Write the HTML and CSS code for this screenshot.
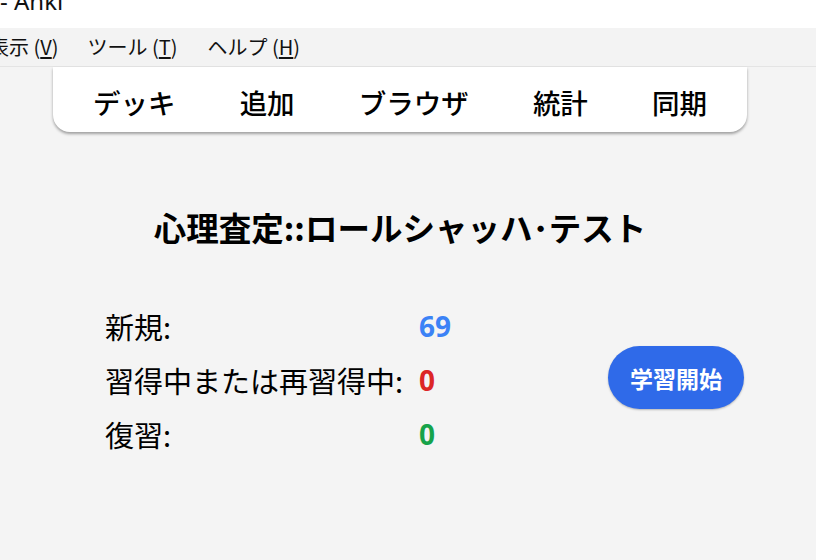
FILE: index.html
```html
<!DOCTYPE html>
<html lang="ja">
<head>
<meta charset="utf-8">
<link rel="stylesheet" href="styles.css">
</head>
<body>
<div class="titlebar"><span class="title">- Anki</span></div>
<div class="menubar">
  <span class="menu m1">表示 (<u>V</u>)</span>
  <span class="menu">ツール (<u>T</u>)</span>
  <span class="menu">ヘルプ (<u>H</u>)</span>
</div>
<main class="content">
  <nav class="toolbar">
    <span class="tb">デッキ</span>
    <span class="tb">追加</span>
    <span class="tb">ブラウザ</span>
    <span class="tb">統計</span>
    <span class="tb">同期</span>
  </nav>
  <h1 class="deck">心理査定::ロールシャッハ･テスト</h1>
  <div class="overview">
    <div class="counts">
      <div class="label">新規:</div><div class="num new">69</div>
      <div class="label">習得中または再習得中:</div><div class="num learn">0</div>
      <div class="label">復習:</div><div class="num review">0</div>
    </div>
    <button class="study">学習開始</button>
  </div>
</main>
</body>
</html>
```

FILE: styles.css
```css
html, body {
  margin: 0;
  padding: 0;
  width: 816px;
  height: 560px;
  overflow: hidden;
  background: #f4f4f4;
  font-family: "Noto Sans CJK JP", "Noto Sans", sans-serif;
  color: #000;
}
.titlebar {
  height: 28px;
  background: #ffffff;
  overflow: hidden;
}
.title {
  display: block;
  margin-top: -15px;
  font-family: "Noto Sans", "Noto Sans CJK JP", sans-serif;
  font-size: 24px;
  line-height: 32px;
  color: #111;
}
.menubar {
  height: 39px;
  background: #f3f3f3;
  border-bottom: 1px solid #e4e4e4;
  display: flex;
  align-items: center;
  box-sizing: border-box;
}
.menu {
  font-size: 20px;
  line-height: 26px;
  margin-right: 30px;
  color: #111;
  white-space: nowrap;
}
.menu u { text-underline-offset: 2px; }
.m1 { margin-left: -11px; margin-right: 29px; }
.content {
  width: 800px;
  display: flex;
  flex-direction: column;
  align-items: center;
}
.toolbar {
  width: 694px;
  height: 65px;
  background: #fff;
  border-radius: 0 0 17px 17px;
  box-shadow: 0 2px 3px rgba(0,0,0,0.35);
  display: flex;
  justify-content: space-between;
  align-items: center;
  padding: 0 40px;
  box-sizing: border-box;
}
.tb {
  font-size: 27.5px;
  font-weight: 500;
  line-height: 34px;
  padding-top: 4px;
}
.deck {
  margin: 73px 0 0 0;
  font-size: 32.5px;
  font-weight: 700;
  line-height: 44px;
}
.overview {
  align-self: flex-start;
  width: 639px;
  margin-left: 105px;
  margin-top: 58px;
  display: flex;
  align-items: center;
  justify-content: space-between;
}
.counts {
  display: grid;
  grid-template-columns: 314px auto;
  row-gap: 16px;
  font-size: 29px;
  line-height: 38px;
}
.num {
  font-weight: 700;
  font-size: 28px;
  font-family: "Open Sans", "Noto Sans", sans-serif;
}
.new { color: #3b82f6; }
.learn { color: #dc2626; }
.review { color: #16a34a; }
.study {
  width: 136px;
  height: 63px;
  margin-top: -5px;
  border: none;
  border-radius: 32px;
  background: #2f6ae9;
  color: #fff;
  font-family: "Noto Sans CJK JP", sans-serif;
  font-size: 23px;
  font-weight: 700;
  box-shadow: 0 1px 2px rgba(0,0,0,0.25);
  padding: 0;
}
```
